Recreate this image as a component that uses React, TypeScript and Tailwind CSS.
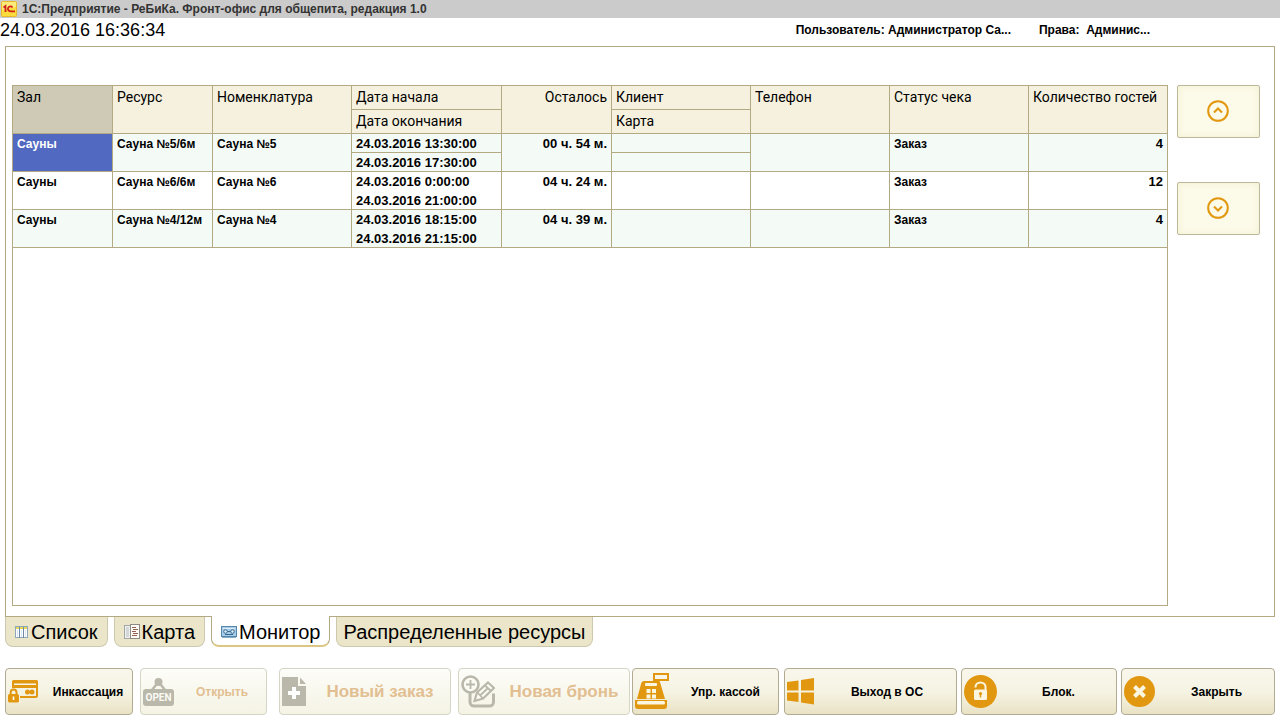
import type { ReactNode } from "react";
import clsx from "clsx";

interface MonitorRow {
  hall: string;
  resource: string;
  item: string;
  startsAt: string;
  endsAt: string;
  left: string;
  client: string;
  card: string;
  phone: string;
  status: string;
  guests: number;
}

const rows: MonitorRow[] = [
  {
    hall: "Сауны",
    resource: "Сауна №5/6м",
    item: "Сауна №5",
    startsAt: "24.03.2016 13:30:00",
    endsAt: "24.03.2016 17:30:00",
    left: "00 ч. 54 м.",
    client: "",
    card: "",
    phone: "",
    status: "Заказ",
    guests: 4,
  },
  {
    hall: "Сауны",
    resource: "Сауна №6/6м",
    item: "Сауна №6",
    startsAt: "24.03.2016 0:00:00",
    endsAt: "24.03.2016 21:00:00",
    left: "04 ч. 24 м.",
    client: "",
    card: "",
    phone: "",
    status: "Заказ",
    guests: 12,
  },
  {
    hall: "Сауны",
    resource: "Сауна №4/12м",
    item: "Сауна №4",
    startsAt: "24.03.2016 18:15:00",
    endsAt: "24.03.2016 21:15:00",
    left: "04 ч. 39 м.",
    client: "",
    card: "",
    phone: "",
    status: "Заказ",
    guests: 4,
  },
];

function Logo() {
  return (
    <svg width="16" height="16" viewBox="0 0 16 16" aria-hidden="true">
      <rect x="0.5" y="0.5" width="15" height="15" rx="1" fill="#fbdc3c" stroke="#e9b92c" />
      <path d="M1 1h14v5L1 9z" fill="#fdeb7c" />
      <path d="M2.500 6.500 4.500 5v6" fill="none" stroke="#d2231a" strokeWidth="1.8" />
      <path d="M11.500 6.400A2.500 2.500 0 1 0 9.400 10.300H14" fill="none" stroke="#d2231a" strokeWidth="1.8" />
    </svg>
  );
}

function ListIcon() {
  return (
    <svg width="14" height="14" viewBox="0 0 14 14" aria-hidden="true">
      <rect x="0.5" y="1.5" width="12" height="11" fill="#fff" stroke="#8fa6bb" />
      <path d="M2.500 5v7M6.500 5v7M10.500 5v7" stroke="#dbe8f3" />
      <rect x="1" y="2" width="11" height="2" fill="#e6d95c" />
      <path d="M4.500 2v11M8.500 2v11" stroke="#6f8aa5" />
    </svg>
  );
}

function MapIcon() {
  return (
    <svg width="16" height="16" viewBox="0 0 16 16" aria-hidden="true">
      <rect x="0.5" y="1.5" width="6" height="13" fill="#eef0f0" stroke="#a2a8a8" />
      <path d="M2 4h3M2 6h3M2 8h3M2 10h3M2 12h3" stroke="#b9bfc0" />
      <rect x="6.5" y="0.5" width="9" height="14" fill="#fdfaf6" stroke="#8d8a84" />
      <path d="M8 3.5h4M9 5.5h5M8 7.5h4M9 9.5h5M8 11.5h5" stroke="#94604f" />
    </svg>
  );
}

function MonitorIcon() {
  return (
    <svg width="16" height="12" viewBox="0 0 16 12" aria-hidden="true">
      <rect x="0.5" y="0.5" width="15" height="10" fill="#a9cbe6" stroke="#5587ac" />
      <path d="M1 11.5h14" stroke="#86a9c4" />
      <path d="M2 2.5h12" stroke="#d9ebf7" />
      <circle cx="4.5" cy="5.5" r="1.8" fill="#dcedf8" stroke="#356a92" />
      <circle cx="11.5" cy="5.5" r="1.8" fill="#dcedf8" stroke="#356a92" />
      <path d="M6.5 5.5h3M4 8.500h8" stroke="#356a92" />
    </svg>
  );
}

function CollectIcon() {
  return (
    <svg width="32" height="24" viewBox="0 0 32 24" aria-hidden="true">
      <rect x="5" y="1" width="24" height="16" rx="1.5" fill="none" stroke="#e1970f" strokeWidth="2" />
      <path d="M4 2q0-2 2-2h22q2 0 2 2v1.500H4zM4 5h26v3H4z" fill="#e1970f" />
      <rect x="-1" y="8" width="13" height="15" fill="#f5f3e3" />
      <circle cx="19.500" cy="12" r="2.500" fill="#e1970f" />
      <circle cx="24" cy="12" r="2.500" fill="#e1970f" />
      <path d="M2.700 15v-2.500a2.900 2.900 0 0 1 5.800 0V15" fill="none" stroke="#e1970f" strokeWidth="2" />
      <rect x="0" y="14" width="11" height="8.500" rx="1.5" fill="#e1970f" />
      <path d="M5.500 16.500v3.500" stroke="#fff" strokeWidth="1.6" />
    </svg>
  );
}

function OpenIcon() {
  return (
    <svg width="31" height="28" viewBox="0 0 31 28" aria-hidden="true">
      <circle cx="15.500" cy="4" r="4" fill="#bab7ab" />
      <path d="M8.500 12.500 15.500 4l7 8.500" fill="none" stroke="#bab7ab" strokeWidth="2.500" />
      <rect x="0" y="11" width="31" height="17" rx="3" fill="#bab7ab" />
      <text
        x="15.5"
        y="23"
        textAnchor="middle"
        fill="#fbfbf4"
        className="font-['Roboto'] text-[10px] font-bold"
      >
        OPEN
      </text>
    </svg>
  );
}

function NewOrderIcon() {
  return (
    <svg width="24" height="29" viewBox="0 0 24 29" aria-hidden="true">
      <path d="M0 0h16v9h8v20H0z" fill="#bab7ab" />
      <path d="M18 0.500 24 7h-6z" fill="#bab7ab" />
      <path d="M12 10v12M6 16h12" stroke="#fff" strokeWidth="4" />
    </svg>
  );
}

function NewBookingIcon() {
  return (
    <svg width="34" height="33" viewBox="0 0 34 33" aria-hidden="true" fill="none" stroke="#bab7ab">
      <path d="M9 17v10a4 4 0 0 0 4 4h15.500a4 4 0 0 0 4-4V18.500" strokeWidth="3" />
      <circle cx="9.500" cy="9.500" r="8" fill="#fbfbf4" strokeWidth="2.600" />
      <path d="M9.500 5v9M5 9.500h9" strokeWidth="1.800" />
      <path d="m13.500 26 2.500-8.500L27 7.500l6 5.500-11 10.500z" fill="#fbfbf4" strokeWidth="2.200" />
      <path d="m24 10.500 6 5.500M16.500 17.500l5.500 6M19 20.500l8-7.500" strokeWidth="1.800" />
    </svg>
  );
}

function CashIcon() {
  return (
    <svg width="34" height="37" viewBox="0 0 34 37" aria-hidden="true">
      <rect x="19" y="1" width="14" height="6" fill="none" stroke="#e1970f" strokeWidth="2" />
      <path d="M23 7v3" stroke="#e1970f" strokeWidth="3" />
      <path d="M9 8h14q2 0 2.300 2L30 26H2L6.300 10Q7 8 9 8z" fill="#e1970f" />
      <path d="M0 27h32v6q0 3-3 3H3q-3 0-3-3z" fill="#e1970f" />
      <rect x="10" y="10" width="12" height="3" rx="1" fill="#fbf6e0" />
      <path d="M11.500 16h4v4h-4zM17 16h4v4h-4zM11.500 21.500h4v4h-4zM17 21.500h4v4h-4z" fill="#fbf6e0" />
      <rect x="2" y="28" width="28" height="3.500" rx="1.500" fill="#fbf6e0" />
    </svg>
  );
}

function WindowsIcon() {
  return (
    <svg width="27" height="27" viewBox="0 0 27 27" aria-hidden="true" fill="#e1970f">
      <path d="M0 4 11.500 2.500V12.500H0zM14 2 27 0v12.500H14zM0 14.500h11.500v9.500L0 22.500zM14 14.500h13v12L14 24.500z" />
    </svg>
  );
}

function LockIcon() {
  return (
    <svg width="33" height="33" viewBox="0 0 33 33" aria-hidden="true">
      <circle cx="16.500" cy="16.500" r="16.500" fill="#e1970f" />
      <path d="M11.500 12.500v-.5a5 4.500 0 0 1 10 0V16" fill="none" stroke="#fbf6e0" strokeWidth="2" />
      <rect x="10" y="14.500" width="13" height="10.500" rx="1.500" fill="#fbf6e0" />
      <circle cx="16.500" cy="18.500" r="1.600" fill="#e1970f" />
      <path d="M16.500 18.500v4" stroke="#e1970f" strokeWidth="1.400" />
    </svg>
  );
}

function CloseIcon() {
  return (
    <svg width="31" height="31" viewBox="0 0 31 31" aria-hidden="true">
      <circle cx="15.500" cy="15.500" r="15.500" fill="#e1970f" />
      <path d="m10.500 10.500 10 10m0-10-10 10" stroke="#fbf6e0" strokeWidth="4" />
    </svg>
  );
}

interface ScrollButtonProps {
  label: string;
  path: string;
}

function ScrollButton({ label, path }: ScrollButtonProps) {
  return (
    <button
      type="button"
      aria-label={label}
      className="flex h-[53px] w-full items-center justify-center rounded-xs border border-[#c0b89a] bg-[#fcfae8] pr-0.5 pb-0.5 shadow-[inset_0_0_6px_#f3efd2]"
    >
      <svg width="22" height="22" viewBox="0 0 22 22" fill="none" stroke="#e1970f" strokeWidth="2">
        <circle cx="11" cy="11" r="9.800" />
        <path d={path} />
      </svg>
    </button>
  );
}

interface TabProps {
  label: string;
  icon?: ReactNode;
  active?: boolean;
}

function Tab({ label, icon, active = false }: TabProps) {
  return (
    <button
      type="button"
      role="tab"
      aria-selected={active}
      className={clsx(
        "flex items-center gap-0.5 rounded-b-lg border border-t-0 text-[20px] leading-6 whitespace-nowrap",
        icon ? "px-[9px]" : "px-1.5",
        active
          ? "-mt-px h-[31px] border-[#b3a983] border-b-2 border-b-[#dcc684] bg-white pt-0.5"
          : "h-[30px] border-[#cdc9ae] bg-[#ebe5ca]",
      )}
    >
      {icon}
      {label}
    </button>
  );
}

interface ActionButtonProps {
  label: string;
  icon: ReactNode;
  className: string;
  large?: boolean;
  disabled?: boolean;
}

function ActionButton({ label, icon, className, large = false, disabled = false }: ActionButtonProps) {
  return (
    <button
      type="button"
      disabled={disabled}
      className={clsx(
        "flex h-[47px] grow items-center rounded border bg-linear-to-b px-0.5",
        disabled
          ? "border-[#d6d4c4] from-[#fdfdf9] to-[#f5f3e4] text-[#e2bf92]"
          : "border-[#b2ab92] from-[#f9f7ec] via-[#f5f3e3] to-[#e9e3c5] text-black",
        large ? "text-[17px]" : "text-xs",
        className,
      )}
    >
      <span className="shrink-0">{icon}</span>
      <span className="grow pl-1.5 text-center font-bold whitespace-nowrap">{label}</span>
    </button>
  );
}

const th = "border-r border-b border-[#b3aa84] px-1 text-left align-top font-normal";
const td = "border-r border-b border-[#b3aa84] px-1 pt-0.5 align-top";

function MonitorTable() {
  return (
    <table className="w-full table-fixed border-separate border-spacing-0">
      <colgroup>
        <col className="w-[100px]" />
        <col className="w-[100px]" />
        <col className="w-[139px]" />
        <col className="w-[150px]" />
        <col className="w-[110px]" />
        <col className="w-[139px]" />
        <col className="w-[139px]" />
        <col className="w-[139px]" />
        <col />
      </colgroup>
      <thead className="bg-[#f5f1de] font-['Roboto','Liberation_Sans',sans-serif] text-[14px] leading-[23px]">
        <tr>
          <th rowSpan={2} className={clsx(th, "bg-[#cfcab5]")}>Зал</th>
          <th rowSpan={2} className={th}>Ресурс</th>
          <th rowSpan={2} className={th}>Номенклатура</th>
          <th className={th}>Дата начала</th>
          <th rowSpan={2} className={clsx(th, "text-right")}>Осталось</th>
          <th className={th}>Клиент</th>
          <th rowSpan={2} className={th}>Телефон</th>
          <th rowSpan={2} className={th}>Статус чека</th>
          <th rowSpan={2} className={clsx(th, "border-r-0 whitespace-nowrap")}>Количество гостей</th>
        </tr>
        <tr>
          <th className={th}>Дата окончания</th>
          <th className={th}>Карта</th>
        </tr>
      </thead>
      {rows.map((row, index) => {
        const selected = index === 0;
        const inner = selected ? "" : "border-b-0 pb-px";
        return (
          <tbody
            key={row.resource}
            className={clsx("text-[12px] leading-4 font-bold", index % 2 === 0 && "bg-[#f4fbf7]")}
          >
            <tr>
              <td rowSpan={2} className={clsx(td, selected && "bg-[#5269c1] text-white")}>{row.hall}</td>
              <td rowSpan={2} className={clsx(td, "whitespace-nowrap")}>{row.resource}</td>
              <td rowSpan={2} className={td}>{row.item}</td>
              <td className={clsx(td, inner, "text-[13px]")}>{row.startsAt}</td>
              <td rowSpan={2} className={clsx(td, "text-right text-[13px]")}>{row.left}</td>
              <td className={clsx(td, inner)}>{row.client}</td>
              <td rowSpan={2} className={td}>{row.phone}</td>
              <td rowSpan={2} className={td}>{row.status}</td>
              <td rowSpan={2} className={clsx(td, "border-r-0 text-right text-[13px]")}>{row.guests}</td>
            </tr>
            <tr>
              <td className={clsx(td, "text-[13px]")}>{row.endsAt}</td>
              <td className={td}>{row.card}</td>
            </tr>
          </tbody>
        );
      })}
    </table>
  );
}

export default function App() {
  return (
    <div className="flex min-h-screen flex-col bg-white pb-[5px] font-['Liberation_Sans',Arial,sans-serif] text-black">
      <header>
        <div className="flex h-[18px] items-center gap-[5px] bg-[#cbcbcb] px-px pb-px text-xs font-bold text-[#333]">
          <Logo />
          <h1>1С:Предприятие - РеБиКа. Фронт-офис для общепита, редакция 1.0</h1>
        </div>
        <div className="flex h-7 items-center justify-between pr-[130px] pb-1">
          <time className="text-[18px] leading-6">24.03.2016 16:36:34</time>
          <div className="flex gap-7 text-xs font-bold">
            <span>Пользователь: Администратор Са...</span>
            <span>Права:&nbsp; Админис...</span>
          </div>
        </div>
      </header>

      <main className="mx-[5px] flex grow gap-[9px] border border-[#b3aa84] pt-[38px] pr-[14px] pb-[10px] pl-1.5">
        <div className="min-w-0 grow border border-[#b3aa84]">
          <MonitorTable />
        </div>
        <div className="flex w-[83px] shrink-0 flex-col gap-11">
          <ScrollButton label="Вверх" path="m7 12.500 4-4 4 4" />
          <ScrollButton label="Вниз" path="m7 9.500 4 4 4-4" />
        </div>
      </main>

      <div role="tablist" className="mx-[5px] flex items-start gap-1.5">
        <Tab label="Список" icon={<ListIcon />} />
        <Tab label="Карта" icon={<MapIcon />} />
        <Tab label="Монитор" icon={<MonitorIcon />} active />
        <Tab label="Распределенные ресурсы" />
      </div>

      <footer className="mx-[5px] mt-[21px] flex">
        <ActionButton label="Инкассация" icon={<CollectIcon />} className="basis-[128px]" />
        <ActionButton label="Открыть" icon={<OpenIcon />} className="ml-[7px] basis-[127px]" disabled />
        <ActionButton label="Новый заказ" icon={<NewOrderIcon />} className="ml-3 basis-[172px]" large disabled />
        <ActionButton label="Новая бронь" icon={<NewBookingIcon />} className="ml-[7px] basis-[172px]" large disabled />
        <ActionButton label="Упр. кассой" icon={<CashIcon />} className="ml-0.5 basis-[147px]" />
        <ActionButton label="Выход в ОС" icon={<WindowsIcon />} className="ml-[5px] basis-[173px]" />
        <ActionButton label="Блок." icon={<LockIcon />} className="ml-1 basis-[156px]" />
        <ActionButton label="Закрыть" icon={<CloseIcon />} className="ml-1 basis-[154px]" />
      </footer>
    </div>
  );
}
